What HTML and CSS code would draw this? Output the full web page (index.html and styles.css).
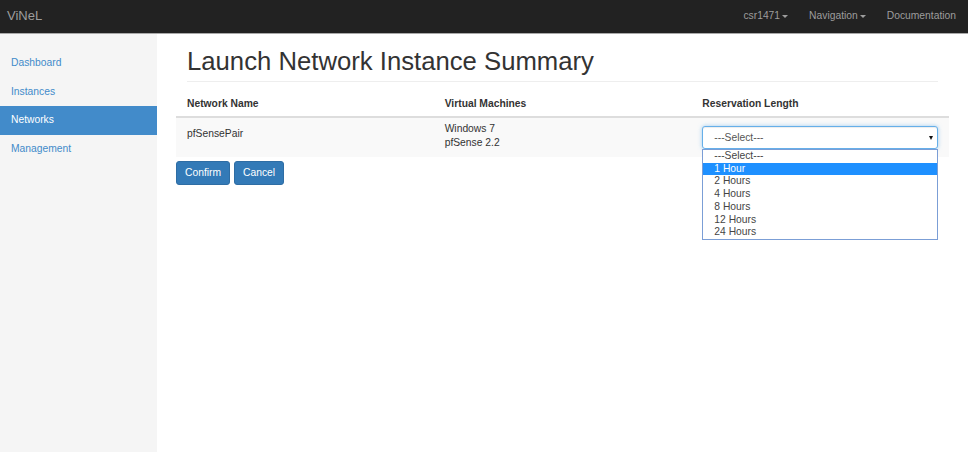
FILE: index.html
```
<!DOCTYPE html>
<html lang="en">
<head>
<meta charset="utf-8">
<title>ViNeL - Launch Network Instance Summary</title>
<link rel="stylesheet" href="styles.css">
</head>
<body>
<header class="navbar">
  <a class="brand" href="#">ViNeL</a>
  <nav class="nav-right">
    <a href="#" class="nav-link">csr1471<span class="caret"></span></a>
    <a href="#" class="nav-link">Navigation<span class="caret"></span></a>
    <a href="#" class="nav-link">Documentation</a>
  </nav>
</header>
<div class="layout">
  <aside class="sidebar">
    <ul class="side-nav">
      <li><a href="#">Dashboard</a></li>
      <li><a href="#">Instances</a></li>
      <li class="active"><a href="#">Networks</a></li>
      <li><a href="#">Management</a></li>
    </ul>
  </aside>
  <main class="main">
    <div class="page-header">
      <h1>Launch Network Instance Summary</h1>
    </div>
    <table class="summary">
      <thead>
        <tr>
          <th>Network Name</th>
          <th>Virtual Machines</th>
          <th>Reservation Length</th>
        </tr>
      </thead>
      <tbody>
        <tr>
          <td class="cell-name">pfSensePair</td>
          <td class="cell-vms">Windows 7<br>pfSense 2.2</td>
          <td class="cell-select">
            <div class="select-wrap">
              <div class="select"><span>---Select---</span><span class="arrow"></span></div>
              <ul class="dropdown">
                <li>---Select---</li>
                <li class="hl">1 Hour</li>
                <li>2 Hours</li>
                <li>4 Hours</li>
                <li>8 Hours</li>
                <li>12 Hours</li>
                <li>24 Hours</li>
              </ul>
            </div>
          </td>
        </tr>
      </tbody>
    </table>
    <div class="actions">
      <button class="btn">Confirm</button>
      <button class="btn">Cancel</button>
    </div>
  </main>
</div>
</body>
</html>
```
FILE: styles.css
```
* { box-sizing: border-box; }
html, body { margin: 0; padding: 0; }
body {
  font-family: "Liberation Sans", Arial, sans-serif;
  font-size: 10.3px;
  line-height: 14px;
  color: #333;
  background: #fff;
}
a { text-decoration: none; }

.navbar {
  height: 34px;
  background: #222;
  border-bottom: 1px solid #a9a9a9;
  display: flex;
  align-items: flex-start;
  justify-content: space-between;
}
.brand {
  font-size: 13px;
  line-height: 31px;
  color: #9d9d9d;
  padding-left: 7px;
}
.nav-right {
  display: flex;
  gap: 21px;
  padding-right: 12px;
}
.nav-link {
  color: #9d9d9d;
  line-height: 31px;
  display: flex;
  align-items: center;
}
.caret {
  display: inline-block;
  width: 0;
  height: 0;
  margin-left: 2px;
  margin-top: 1px;
  border-top: 3px solid #9d9d9d;
  border-left: 3px solid transparent;
  border-right: 3px solid transparent;
}

.layout {
  display: flex;
  min-height: calc(100vh - 34px);
}
.sidebar {
  width: 157px;
  flex: none;
  background: #f5f5f5;
  padding-top: 15px;
}
.side-nav {
  list-style: none;
  margin: 0;
  padding: 0;
}
.side-nav li a {
  display: block;
  line-height: 28.67px;
  height: 28.67px;
  padding-left: 11px;
  color: #428bca;
}
.side-nav li.active a {
  background: #428bca;
  color: #fff;
}

.main {
  flex: 1;
  padding: 12px 19px 0 19px;
}
.page-header {
  margin: 0 11px 10px;
  padding-bottom: 5px;
  border-bottom: 1px solid #eee;
}
.page-header h1 {
  margin: 0;
  font-size: 25.7px;
  line-height: 30px;
  font-weight: normal;
  color: #333;
}

.summary {
  width: 100%;
  table-layout: fixed;
  border-collapse: collapse;
  border-spacing: 0;
}
.summary th {
  text-align: left;
  font-weight: bold;
  padding: 5px 11px 5px;
  border-bottom: 2px solid #ddd;
  vertical-align: bottom;
}
.summary tbody tr { background: #f9f9f9; }
.summary td {
  padding: 4px 11px 7px;
  vertical-align: top;
}
.summary td.cell-name {
  padding-top: 0;
  vertical-align: middle;
}

.select-wrap { position: relative; margin-top: 4px; }
.select {
  height: 23px;
  border: 1px solid #66afe9;
  border-radius: 3px;
  background: #fff;
  box-shadow: inset 0 1px 1px rgba(0,0,0,.075), 0 0 4px rgba(102,175,233,.6);
  display: flex;
  align-items: center;
  justify-content: space-between;
  padding: 0 4px 0 11px;
  line-height: 21px;
  color: #555;
}
.arrow {
  width: 0;
  height: 0;
  border-top: 4px solid #111;
  border-left: 2.5px solid transparent;
  border-right: 2.5px solid transparent;
}
.dropdown {
  position: absolute;
  top: 100%;
  left: 0;
  right: 0;
  margin: 0;
  padding: 0;
  list-style: none;
  background: #fff;
  border: 1px solid #7b9ed6;
  z-index: 5;
}
.dropdown li {
  height: 12.71px;
  line-height: 12.71px;
  padding-left: 11px;
  color: #444;
}
.dropdown li.hl {
  background: #1e90ff;
  color: #fff;
}

.actions {
  display: flex;
  gap: 4px;
  margin-top: 4px;
}
.btn {
  font-family: inherit;
  font-size: 10.3px;
  line-height: 14px;
  height: 24px;
  padding: 4px 8px;
  color: #fff;
  background: #337ab7;
  border: 1px solid #2e6da4;
  border-radius: 3px;
  cursor: pointer;
}
```
